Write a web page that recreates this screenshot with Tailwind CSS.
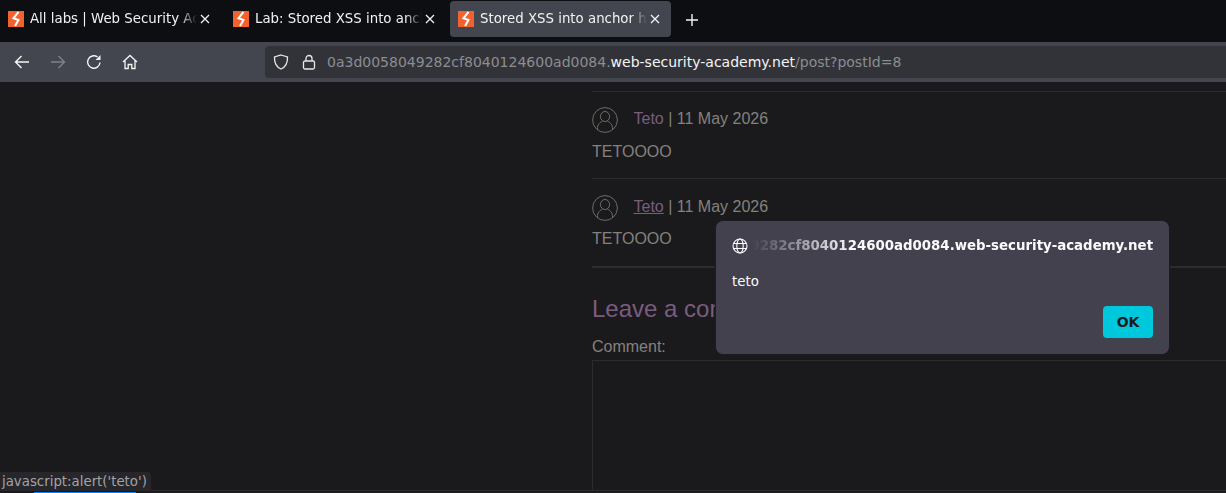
<!DOCTYPE html>
<html lang="en">
<head>
  <meta charset="UTF-8" />
  <title>Stored XSS into anchor href</title>
  <script src="https://cdn.jsdelivr.net/npm/@tailwindcss/browser@4"></script>
</head>
<body class="relative w-[1226px] h-[493px] overflow-hidden bg-[#1a1a1c] font-['DejaVu_Sans',sans-serif]">

  <!-- Tab strip -->
  <div class="flex h-[42px] items-start bg-[#0d0e12] text-[13.33px] text-[#f2f2f3]">
    <div class="flex w-[225px] h-[36px] mt-px items-center pl-2 pr-[14px] shrink-0">
      <svg class="w-4 h-4 shrink-0" viewBox="0 0 16 16"><rect width="16" height="16" fill="#f2622e"/><path d="M10.5 1 5.5 7.2 10.5 9 7 15" fill="none" stroke="#fff" stroke-width="2"/></svg>
      <span class="ml-[6px] flex-1 overflow-hidden whitespace-nowrap [mask-image:linear-gradient(to_right,black_90%,transparent)]">All labs | Web Security Academy</span>
      <svg class="w-[10px] h-[10px] ml-[3px] mr-px shrink-0" viewBox="0 0 10 10" fill="none" stroke="#f2f2f3" stroke-width="1.3"><path d="M1 1l8 8M9 1l-8 8"/></svg>
    </div>
    <div class="flex w-[225px] h-[36px] mt-px items-center pl-2 pr-[14px] shrink-0">
      <svg class="w-4 h-4 shrink-0" viewBox="0 0 16 16"><rect width="16" height="16" fill="#f2622e"/><path d="M10.5 1 5.5 7.2 10.5 9 7 15" fill="none" stroke="#fff" stroke-width="2"/></svg>
      <span class="ml-[6px] flex-1 overflow-hidden whitespace-nowrap [mask-image:linear-gradient(to_right,black_90%,transparent)]">Lab: Stored XSS into anchor href</span>
      <svg class="w-[10px] h-[10px] ml-[3px] mr-px shrink-0" viewBox="0 0 10 10" fill="none" stroke="#f2f2f3" stroke-width="1.3"><path d="M1 1l8 8M9 1l-8 8"/></svg>
    </div>
    <div class="flex w-[221px] h-[36px] mt-px items-center pl-2 pr-[10px] shrink-0 rounded-[4px] bg-[#43464e]">
      <svg class="w-4 h-4 shrink-0" viewBox="0 0 16 16"><rect width="16" height="16" fill="#f2622e"/><path d="M10.5 1 5.5 7.2 10.5 9 7 15" fill="none" stroke="#fff" stroke-width="2"/></svg>
      <span class="ml-[6px] flex-1 overflow-hidden whitespace-nowrap [mask-image:linear-gradient(to_right,black_90%,transparent)]">Stored XSS into anchor href</span>
      <svg class="w-[10px] h-[10px] ml-[3px] mr-px shrink-0" viewBox="0 0 10 10" fill="none" stroke="#f2f2f3" stroke-width="1.3"><path d="M1 1l8 8M9 1l-8 8"/></svg>
    </div>
    <svg class="w-[14px] h-[14px] ml-[14px] mt-[13px]" viewBox="0 0 14 14" fill="none" stroke="#f2f2f3" stroke-width="1.4"><path d="M7 1v12M1 7h12"/></svg>
  </div>

  <!-- Nav bar -->
  <div class="flex h-10 items-center bg-[#43464e] pl-[14px]">
    <svg class="w-4 h-4" viewBox="0 0 16 16" fill="none" stroke="#f5f5f6" stroke-width="1.4"><path d="M15 8H1.5M7.5 2 1.5 8l6 6"/></svg>
    <svg class="w-4 h-4 ml-5" viewBox="0 0 16 16" fill="none" stroke="#7f8186" stroke-width="1.4"><path d="M1 8h13.5M8.5 2l6 6-6 6"/></svg>
    <svg class="w-4 h-4 ml-5" viewBox="0 0 16 16" fill="none" stroke="#f5f5f6" stroke-width="1.4"><path d="M14 8.5A6.2 6.2 0 1 1 11.5 3"/><path d="M14.5 1v5h-5z" fill="#f5f5f6" stroke="none"/></svg>
    <svg class="w-4 h-4 ml-5" viewBox="0 0 16 16" fill="none" stroke="#f5f5f6" stroke-width="1.3"><path d="M1 8 8 1.5 15 8M3 6.5V14.5H6.2V10.5H9.8V14.5H13V6.5"/></svg>
    <div class="flex h-8 flex-1 items-center ml-[127px] rounded-l-[4px] bg-[#323338] pl-2 text-[14px] text-[#8c8d91]">
      <svg class="w-4 h-4" viewBox="0 0 16 16" fill="none" stroke="#e8e8ea" stroke-width="1.3"><path d="M8 1 14.5 3C14.8 9 12.5 13 8 15 3.5 13 1.2 9 1.5 3Z"/></svg>
      <svg class="w-4 h-4 ml-3" viewBox="0 0 16 16" fill="none" stroke="#e8e8ea" stroke-width="1.3"><rect x="2.5" y="7" width="11" height="8" rx="1.5"/><path d="M5 7V4.5a3 3 0 0 1 6 0V7"/></svg>
      <span class="ml-[10px] whitespace-nowrap">0a3d0058049282cf8040124600ad0084.<span class="text-[#f5f5f6]">web-security-academy.net</span>/post?postId=8</span>
    </div>
  </div>

  <!-- Page content -->
  <div class="h-[409px] overflow-hidden border-b border-[#2c2c2e] pl-[592px] pt-[9px] font-['Liberation_Sans',sans-serif] text-[16px] text-[#85817c]">
    <div class="border-t border-[#2c2c2e] pt-[15px] h-[87px]">
      <div class="flex items-start h-[27px]">
        <svg class="w-[26px] h-[26px]" viewBox="0 0 26 26" fill="none" stroke="#6f6c69"><circle cx="13" cy="13" r="12.4"/><ellipse cx="13" cy="9.5" rx="4.6" ry="5"/><path d="M5.5 22.5C5 17 9 15 10.5 14M20.5 22.5C21 17 17 15 15.5 14"/></svg>
        <span class="ml-[15.5px] leading-[23px]"><a class="text-[#7a5c80]">Teto</a> | 11 May 2026</span>
      </div>
      <p class="mt-[6px]">TETOOOO</p>
    </div>
    <div class="border-t border-[#2c2c2e] pt-[16px] h-[88px]">
      <div class="flex items-start h-[27px]">
        <svg class="w-[26px] h-[26px]" viewBox="0 0 26 26" fill="none" stroke="#6f6c69"><circle cx="13" cy="13" r="12.4"/><ellipse cx="13" cy="9.5" rx="4.6" ry="5"/><path d="M5.5 22.5C5 17 9 15 10.5 14M20.5 22.5C21 17 17 15 15.5 14"/></svg>
        <span class="ml-[15.5px] leading-[24px]"><a class="text-[#7a5c80] underline">Teto</a> | 11 May 2026</span>
      </div>
      <p class="mt-[5px]">TETOOOO</p>
    </div>
    <div class="border-t-2 border-[#2c2c2e] pt-[27px]">
      <h2 class="text-[24px] leading-[28px] text-[#7a5c80] whitespace-nowrap">Leave a comment</h2>
      <label class="block mt-[15px] leading-[18px]">Comment:</label>
      <div class="mt-[4px] h-[160px] w-[700px] border border-[#2c2c2e]"></div>
    </div>
  </div>

  <!-- Alert dialog -->
  <div class="absolute left-[715px] top-[220px] w-[455px] h-[135px] rounded-lg border border-[#1c1b22] bg-[#43414e] px-4 pt-[16px] text-[13.33px] text-[#fbfbfe] font-['DejaVu_Sans',sans-serif]">
    <div class="flex items-center h-[18px]">
      <svg class="w-4 h-4 shrink-0" viewBox="0 0 16 16" fill="none" stroke="#fbfbfe" stroke-width="1.1"><circle cx="8" cy="8" r="7"/><ellipse cx="8" cy="8" rx="3.2" ry="7"/><path d="M1.5 5.5h13M1.5 10.5h13"/></svg>
      <div class="flex-1 ml-1 overflow-hidden flex justify-end font-bold whitespace-nowrap [mask-image:linear-gradient(to_right,transparent,black_25%)]">0a3d0058049282cf8040124600ad0084.web-security-academy.net</div>
    </div>
    <p class="mt-[18px] leading-[18px]">teto</p>
    <div class="flex justify-end mt-[15px]">
      <button class="w-[50px] h-8 rounded-[4px] bg-[#00c8dc] text-[14px] font-bold text-[#1c1b22]">OK</button>
    </div>
  </div>

  <!-- Link status tooltip -->
  <div class="absolute left-0 top-[472px] h-[19px] rounded-tr-[4px] bg-[#26262b] pl-[2px] pr-[4px] text-[13.33px] leading-[20px] text-[#a3a3a6]">javascript:alert('teto')</div>
  <div class="absolute left-[34px] top-[492px] h-px w-[102px] bg-[#0a84ff]"></div>
</body>
</html>
